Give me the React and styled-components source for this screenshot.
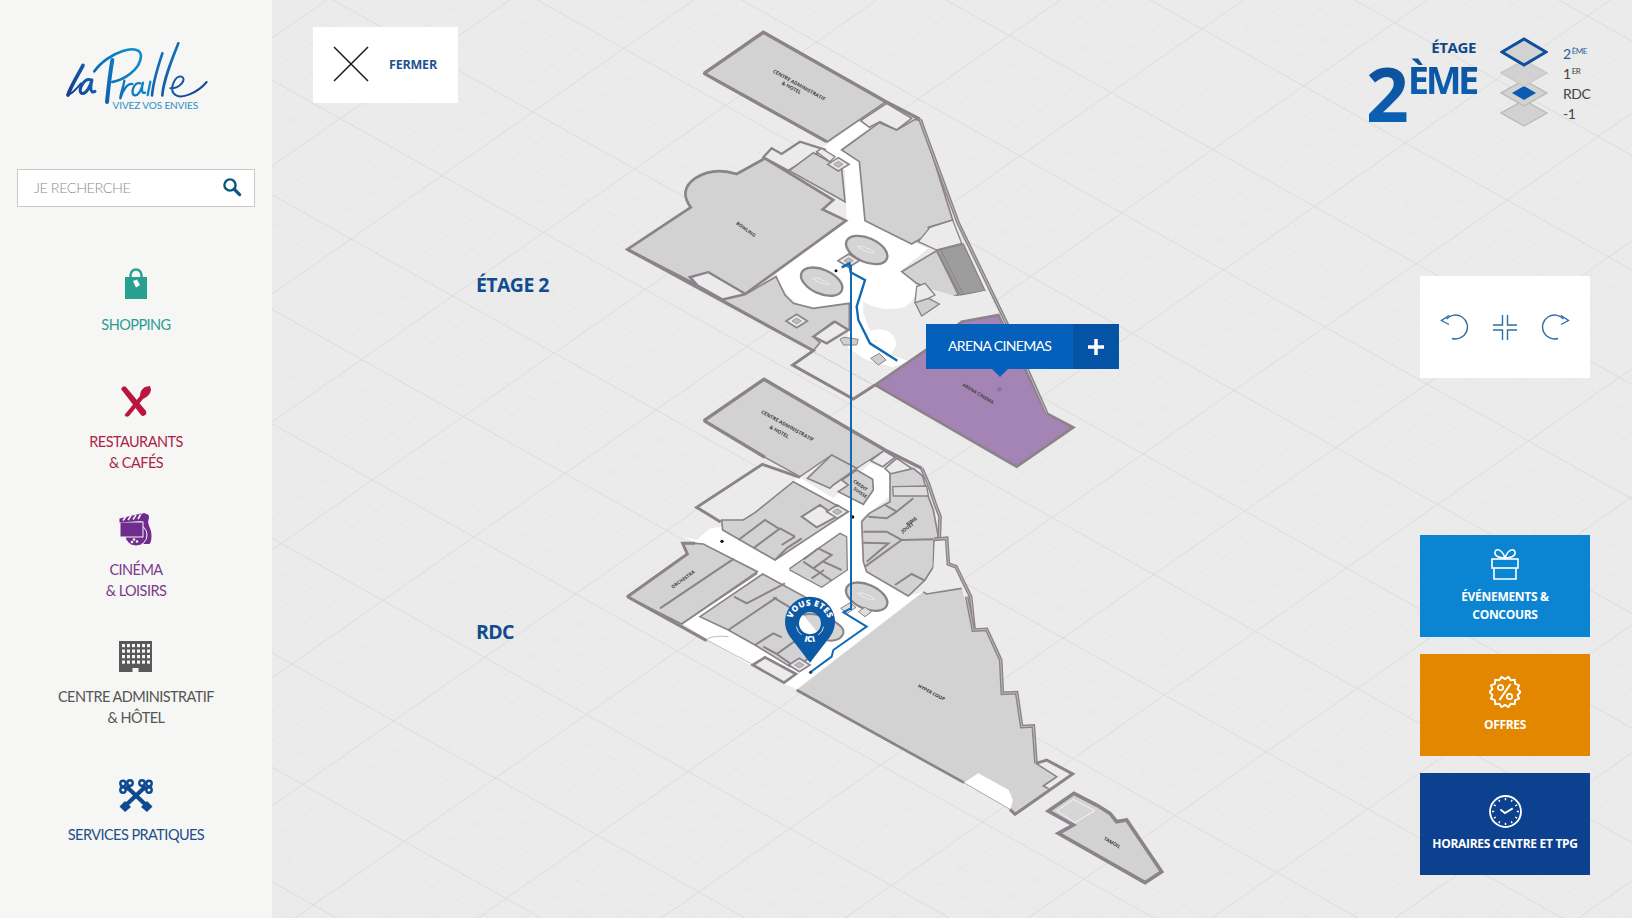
import React from 'react';
import styled, { createGlobalStyle } from 'styled-components';

const Global = createGlobalStyle`
  html, body { margin: 0; padding: 0; height: 100%; overflow: hidden; }
  #root { height: 100%; }
  * { box-sizing: border-box; }
`;

const FONT = `"Lato", "Open Sans", "Liberation Sans", sans-serif`;
const BOLD = `"Open Sans", "Liberation Sans", sans-serif`;

const Page = styled.div`
  display: flex;
  width: 1632px;
  height: 918px;
  font-family: ${FONT};
  overflow: hidden;
`;

const Sidebar = styled.aside`
  flex: 0 0 272px;
  background: #f6f6f4;
  display: flex;
  flex-direction: column;
  align-items: center;
  padding-top: 30px;
`;

const LogoBox = styled.div`
  width: 160px;
  height: 84px;
  display: flex;
  flex-direction: column;
  align-items: flex-end;
  position: relative;
  left: -1px;
  svg { display: block; flex: 0 0 auto; }
`;

const Tagline = styled.span`
  font-size: 10px;
  line-height: 11px;
  margin-top: -20px;
  margin-right: 17px;
  color: #2b8fc6;
  letter-spacing: -0.1px;
  white-space: nowrap;
`;

const Search = styled.div`
  width: 238px;
  height: 38px;
  margin-top: 55px;
  margin-bottom: 60px;
  background: #fff;
  border: 1px solid #cbcbc6;
  display: flex;
  align-items: center;
  justify-content: space-between;
  padding: 0 12px 2px 16px;
`;

const SearchText = styled.span`
  color: #8d8d8d;
  font-size: 14.5px;
  font-weight: 300;
  letter-spacing: -0.5px;
`;

const Nav = styled.nav`
  display: flex;
  flex-direction: column;
  align-items: center;
  width: 100%;
`;

const NavItem = styled.a`
  height: ${p => p.$h}px;
  display: flex;
  flex-direction: column;
  align-items: center;
  color: ${p => p.$c};
  text-align: center;
  font-size: 14.5px;
  font-weight: 400;
  line-height: 20.5px;
  letter-spacing: -0.55px;
  svg { display: block; margin-bottom: ${p => p.$g}px; }
`;

const Main = styled.main`
  flex: 1;
  position: relative;
  background: #ebebeb;
`;

const MapSvg = styled.svg`
  display: block;
  width: 1360px;
  height: 918px;
`;

const CloseBtn = styled.button`
  position: absolute;
  left: 41px;
  top: 27px;
  width: 145px;
  height: 76px;
  background: #fff;
  border: 0;
  display: flex;
  align-items: center;
  gap: 20px;
  padding: 0 0 2px 20px;
  font-family: ${BOLD};
  font-weight: 700;
  font-size: 12.5px;
  letter-spacing: -0.2px;
  color: #1c5391;
`;

const Popup = styled.div`
  position: absolute;
  left: 654px;
  top: 324px;
  width: 193px;
  height: 45px;
  display: flex;
  background: #0560bc;
  color: #fff;
  &::after {
    content: '';
    position: absolute;
    left: 66px;
    top: 45px;
    border: 8px solid transparent;
    border-top-color: #0560bc;
    border-bottom: 0;
  }
`;

const PopupName = styled.div`
  flex: 1;
  display: flex;
  align-items: center;
  padding: 0 0 2px 22px;
  font-size: 14px;
  letter-spacing: -0.65px;
  white-space: nowrap;
`;

const PopupPlus = styled.div`
  flex: 0 0 46px;
  background: #0553a5;
  display: flex;
  align-items: center;
  justify-content: center;
`;

const FloorPanel = styled.div`
  position: absolute;
  right: 41px;
  top: 37px;
  display: flex;
  align-items: flex-start;
`;

const FloorTitle = styled.div`
  display: flex;
  flex-direction: column;
  align-items: flex-end;
  margin-right: 24px;
  font-family: ${BOLD};
  color: #0d4f98;
`;

const FloorWord = styled.span`
  font-weight: 700;
  font-size: 15px;
  line-height: 20px;
  letter-spacing: -0.4px;
  color: #124886;
`;

const FloorBig = styled.div`
  display: flex;
  align-items: flex-start;
`;

const FloorNum = styled.span`
  font-size: 75px;
  line-height: 72px;
  font-weight: 700;
  letter-spacing: -2px;
  background: linear-gradient(#0d4f98, #0a62b8);
  -webkit-background-clip: text;
  background-clip: text;
  color: transparent;
`;

const FloorSup = styled.span`
  font-size: 38px;
  line-height: 44px;
  font-weight: 700;
  letter-spacing: -3.4px;
  padding-right: 3px;
  margin-right: -3px;
  margin-left: 1px;
  background: linear-gradient(#0d4f98, #0a62b8);
  -webkit-background-clip: text;
  background-clip: text;
  color: transparent;
`;

const FloorList = styled.ul`
  list-style: none;
  margin: 7px 0 0 15px;
  padding: 0;
  width: 28px;
  font-size: 14px;
  font-weight: 400;
  letter-spacing: -0.5px;
`;

const FloorItem = styled.li`
  height: 20px;
  line-height: 20px;
  white-space: nowrap;
  color: ${p => (p.$on ? '#2a5c96' : '#444')};
  sup { font-size: 8px; line-height: 0; vertical-align: 5px; margin-left: 1px; }
`;

const Rail = styled.div`
  position: absolute;
  right: 42px;
  top: 276px;
  width: 170px;
  display: flex;
  flex-direction: column;
`;

const Controls = styled.div`
  height: 102px;
  margin-bottom: 157px;
  background: #fff;
  display: flex;
  align-items: center;
  justify-content: center;
  gap: 23px;
`;

const Card = styled.a`
  height: 102px;
  margin-bottom: 17px;
  background: ${p => p.$bg};
  color: #fff;
  display: flex;
  flex-direction: column;
  align-items: center;
  padding-top: ${p => p.$pt}px;
  text-align: center;
  font-family: ${BOLD};
  font-weight: 700;
  font-size: 12px;
  line-height: 18px;
  letter-spacing: -0.3px;
  svg { display: block; margin-bottom: ${p => p.$gap}px; }
`;

const WALL = '#8b828a';
const SHOP = '#d2d2d2';
const PALE = '#ebebeb';
const BLUE = '#1269b3';

const Gridlines = () => {
  const ox = 393.7, oy = 721;
  const u = [101.7, 57];
  const v = [91, -63.5];
  const lines = [];
  for (let i = -60; i <= 60; i++) {
    for (let s = 0; s < 4; s++) {
      const k = i + s / 4;
      const major = s === 0;
      const c = major ? '#dcdcdc' : '#e6e6e6';
      const w = major ? 1 : 0.8;
      const ax = ox + k * v[0], ay = oy + k * v[1];
      lines.push(<line key={`a${k}`} x1={ax - 30 * u[0]} y1={ay - 30 * u[1]} x2={ax + 30 * u[0]} y2={ay + 30 * u[1]} stroke={c} strokeWidth={w} />);
      const bx = ox + k * u[0], by = oy + k * u[1];
      lines.push(<line key={`b${k}`} x1={bx - 30 * v[0]} y1={by - 30 * v[1]} x2={bx + 30 * v[0]} y2={by + 30 * v[1]} stroke={c} strokeWidth={w} />);
    }
  }
  return <g>{lines}</g>;
};

const Shop = ({ p, f = SHOP, w = 5, s = WALL }) => (
  <polygon points={p} fill={f} stroke={s} strokeWidth={w} strokeLinejoin="miter" />
);

const DoubleWall = ({ d, w = 11 }) => (
  <g fill="none">
    <path d={d} stroke={WALL} strokeWidth={w} />
    <path d={d} stroke="#c9c5c8" strokeWidth={2.5} />
  </g>
);

const Lbl = ({ x, y, r = 30, size = 14, children, c = '#444' }) => (
  <text x={x} y={y} transform={`rotate(${r} ${x} ${y})`} fontFamily="Open Sans, sans-serif" fontWeight="700" fontSize={size} fill={c} textAnchor="middle">{children}</text>
);

const Well = ({ x, y }) => (
  <g transform={`rotate(24 ${x} ${y})`}>
    <ellipse cx={x} cy={y} rx="66" ry="36" fill="#d4d4d4" stroke={WALL} strokeWidth="7" />
    <path d={`M${x - 28} ${y + 2} q18 -12 26 -6 q12 -6 26 2 q-20 12 -52 4z`} fill="none" stroke="#f2f2f2" strokeWidth="2" />
  </g>
);

const Lift = ({ x, y }) => (
  <g>
    <polygon points={`${x - 32},${y} ${x},${y - 20} ${x + 32},${y} ${x},${y + 20}`} fill="#e8e8e8" stroke={WALL} strokeWidth="5" />
    <polygon points={`${x - 14},${y} ${x},${y - 9} ${x + 14},${y} ${x},${y + 9}`} fill="#bdbdbd" stroke={WALL} strokeWidth="2" />
  </g>
);

const UpperFloor = () => (
  <g transform="translate(600 20) scale(0.33333)">
    {/* pale ground */}
    <polygon points="745,850 790,845 915,860 960,905 1000,870 1080,890 985,985 905,1020 820,1095 760,1135 580,1035 640,990 745,930" fill={PALE} />
    {/* floor */}
    <path d="M665 385 L775 305 L810 322 L722 388 L778 425 L795 602 L985 685 L905 750 Q935 780 950 800 Q950 840 915 860 Q850 880 790 845 L790 880 L810 932 Q880 915 890 975 L872 1005 L925 1022 L880 1042 L800 1020 L745 985 L745 930 L748 848 Q700 865 640 865 Q560 855 528 760 L740 605 L735 450 L670 395 Z" fill="#fff" />
    {/* admin */}
    <Shop p="312,160 490,37 858,245 682,365" w={5} />
    <polygon points="782,302 860,250 935,295 890,330 840,305 808,322" fill={PALE} stroke={WALL} strokeWidth="5" />
    <path d="M312 160 L490 37 L858 245 L960 298" fill="none" stroke={WALL} strokeWidth="10" />
    <path d="M312 160 L680 365" fill="none" stroke={WALL} strokeWidth="10" />
    {/* east big */}
    <Shop p="725,390 838,308 890,330 945,298 965,302 1058,600 985,622 990,640 935,672 795,602 778,425" />
    <polygon points="955,665 990,622 1058,600 1085,670 1010,690" fill={PALE} stroke={WALL} strokeWidth="4" />
    <Shop p="905,755 1010,692 1075,825 1040,832 950,790" />
    <polygon points="1010,692 1090,672 1155,812 1080,825" fill="#9c9c9c" stroke={WALL} strokeWidth="4" />
    <path d="M1022 690 L1090 825" stroke={WALL} strokeWidth="3" />
    <polygon points="950,795 1075,830 1155,812 1192,884 1085,905 1010,872 960,905 945,850" fill={PALE} />
    <polygon points="945,848 985,835 1018,852 965,888" fill="#cfcfcf" stroke={WALL} strokeWidth="4" />
    <polygon points="950,800 975,790 1005,825 985,835 945,848" fill={PALE} stroke={WALL} strokeWidth="4" />
    {/* arena */}
    <polygon points="825,1095 985,985 1085,905 1195,885 1340,1180 1420,1222 1250,1340" fill="#a484b4" stroke={WALL} strokeWidth="8" />
    <circle cx="1198" cy="1108" r="7" fill="#8f6ea3" />
    <Lbl x="1132" y="1125" r={31}>ARENA CINEMA</Lbl>
    <DoubleWall d="M960 298 L1075 610 L1220 910 L1340 1180" />
    {/* bowling */}
    <path d="M82 688 L272 562 Q235 510 285 475 Q340 440 410 462 L495 415 L700 540 L668 568 L738 602 L435 822 L325 757 L270 772 L290 795 Z" fill={SHOP} stroke={WALL} strokeWidth="8" />
    <polygon points="272,772 325,757 435,822 368,838 292,795" fill={PALE} stroke={WALL} strokeWidth="6" />
    <Lbl x="435" y="632" r={36}>BOWLING</Lbl>
    <polygon points="490,412 515,385 545,402 600,365 672,388 565,452" fill={PALE} stroke={WALL} strokeWidth="7" />
    <Shop p="568,452 640,398 725,445 735,545" />
    <polygon points="650,395 665,385 705,410 690,425" fill={PALE} stroke={WALL} strokeWidth="4" />
    <Lift x={715} y={433} />
    {/* south */}
    <Shop p="368,840 435,824 528,770 555,825 580,850 640,865 748,850 748,930 700,905 640,950 660,968 640,992" />
    <polygon points="640,950 705,905 745,930 680,970" fill={PALE} stroke={WALL} strokeWidth="7" />
    <Lift x={590} y={903} />
    <polygon points="720,958 732,952 775,958 770,975 730,975" fill="#cfcfcf" stroke={WALL} strokeWidth="3" />
    <polygon points="812,1015 838,1000 858,1020 835,1035" fill="#cfcfcf" stroke={WALL} strokeWidth="3" />
    <path d="M82 688 L640 992 L578 1035 L760 1137 L825 1095" fill="none" stroke={WALL} strokeWidth="9" />
    <path d="M640 995 L815 1092" stroke="#777" strokeWidth="1.5" strokeDasharray="3 3" fill="none" />
    <Well x={800} y={690} />
    <Well x={665} y={785} />
    <Lift x={746} y={722} />
    <circle cx="708" cy="752" r="4.5" fill="#111" />
    <Lbl x="595" y="200" r={29} size={15}>CENTRE ADMINISTRATIF</Lbl>
    <Lbl x="572" y="208" r={29} size={15}>&amp; HOTEL</Lbl>
    {/* route */}
    <path d="M752 730 L725 742 L748 730 L752 757 L795 780 L770 860 L775 900 L810 970 L892 1022" fill="none" stroke={BLUE} strokeWidth="7" />
  </g>
);

const LowerFloor = () => (
  <g transform="translate(600 370) scale(0.33333)">
    <polygon points="290,510 330,475 365,470 595,320 700,385 810,280 865,300 875,375 785,445 795,605 920,680 968,665 590,958 560,945 450,885 320,810 250,760 300,720 470,600 250,500" fill="#fff" />
    <polygon points="255,755 300,738 385,780 465,830 460,885 345,800" fill="#fff" />
    {/* pale block */}
    <polygon points="290,412 487,283 595,322 465,428 430,450 365,450" fill={PALE} />
    <path d="M362 456 L290 412 L487 283 L600 322" fill="none" stroke={WALL} strokeWidth="9" />
    {/* admin */}
    <Shop p="312,152 492,28 855,240 770,295 695,255 600,320 495,262" w={4} />
    <polygon points="812,272 852,242 885,262 848,290" fill={PALE} stroke={WALL} strokeWidth="5" />
    <polygon points="855,295 890,265 935,295 905,320 870,310" fill={PALE} stroke={WALL} strokeWidth="5" />
    <path d="M312 152 L492 28 L855 240 L965 295" fill="none" stroke={WALL} strokeWidth="10" />
    <path d="M312 152 L495 262" fill="none" stroke={WALL} strokeWidth="10" />
    <Lbl x="560" y="172" r={29} size={15}>CENTRE ADMINISTRATIF</Lbl>
    <Lbl x="535" y="190" r={29} size={15}>&amp; HOTEL</Lbl>
    {/* credit suisse */}
    <Shop p="622,325 695,255 770,295 700,345 690,355" />
    <Shop p="725,330 770,300 818,328 820,360 790,403 715,365 745,345" />
    <Lbl x="778" y="350" r={35}>CREDIT</Lbl>
    <Lbl x="778" y="372" r={35}>SUISSE</Lbl>
    {/* north row */}
    <Shop p="365,450 368,480 525,570 745,425 580,335 465,428 430,450" />
    <path d="M415 510 L495 450 L540 478 M460 535 L540 475 L585 500 M525 570 L560 535 L605 505 M545 525 L585 500" stroke={WALL} strokeWidth="6" fill="none" />
    <polygon points="605,440 660,405 710,440 650,472" fill={PALE} stroke={WALL} strokeWidth="6" />
    <Lift x={712} y={425} />
    {/* center */}
    <Shop p="570,595 720,490 740,500 742,600 665,652 570,600" w={4} />
    <path d="M612 568 L655 535 L695 555 L640 595 L695 632 M640 595 L610 575 M725 600 L670 575 M635 625 L672 600" stroke={WALL} strokeWidth="6" fill="none" />
    {/* east */}
    <path d="M870 312 L940 295 L968 318 L985 380 L1000 420 L1015 500 L1002 510 L1000 590 L975 630 L925 678 L800 605 L790 575 L785 455 L808 430 L870 395 Z" fill={SHOP} stroke={WALL} strokeWidth="5" />
    <polygon points="878,350 980,348 985,378 880,378" fill="#dcdcdc" stroke={WALL} strokeWidth="4" />
    <path d="M790 485 L860 485 L905 510 L1000 508 M790 518 L865 520 L800 575 M805 440 L860 445 L890 425 M855 405 L890 425 L940 385 M885 645 L935 612 L975 632 M905 510 L795 590" stroke={WALL} strokeWidth="6" fill="none" />
    <Lbl x="937" y="458" r={-35} c="#333">KING</Lbl>
    <Lbl x="925" y="477" r={-35} c="#333">JOUET</Lbl>
    <polygon points="1005,512 1040,510 1042,585 1065,592 1085,655 1000,668 968,668 1000,600" fill={PALE} />
    <DoubleWall d="M965 295 L985 340 L1005 400 L1020 440 L1018 505" />
    <DoubleWall d="M1002 508 L1040 505 L1045 582 L1068 590 L1112 680 L1122 775" />
    {/* orchestra */}
    <polygon points="82,680 262,552 248,520 285,520 310,522 472,605 245,762" fill={SHOP} stroke={WALL} strokeWidth="5" />
    <path d="M82 680 L262 552 L248 520 L285 520" fill="none" stroke={WALL} strokeWidth="9" />
    <path d="M180 715 L402 566" stroke={WALL} strokeWidth="6" />
    <Lbl x="252" y="632" r={-36}>ORCHESTRA</Lbl>
    <path d="M245 762 L472 610" stroke={WALL} strokeWidth="4" />
    {/* west shops */}
    <polygon points="300,740 488,612 650,700 565,760 640,830 620,870 570,890 465,825 385,780" fill={SHOP} stroke={WALL} strokeWidth="5" />
    <path d="M385 780 L530 682 M402 680 L440 700 L555 640 M520 682 L575 715 M465 825 L520 790 L545 802 M490 830 L530 852 L592 808 M530 852 L570 880" stroke={WALL} strokeWidth="6" fill="none" />
    <Lift x={598} y={885} />
    <path d="M82 680 L320 812" fill="none" stroke={WALL} strokeWidth="9" />
    <path d="M320 810 L455 882" fill="none" stroke="#999" strokeWidth="2" />
    <path d="M320 808 Q340 795 385 800" fill="none" stroke="#999" strokeWidth="2" />
    <polygon points="458,885 495,862 588,912 552,938" fill={PALE} stroke={WALL} strokeWidth="8" />
    <Well x={800} y={680} />
    <path d="M610 735 C640 720 740 760 730 790 C720 815 690 815 670 808" fill="#d4d4d4" stroke={WALL} strokeWidth="6" />
    <polygon points="722,715 750,698 768,712 742,730" fill="#dcdcdc" stroke={WALL} strokeWidth="3" />
    <polygon points="775,725 795,712 815,725 795,740" fill="#dcdcdc" stroke={WALL} strokeWidth="3" />
    <circle cx="366" cy="514" r="5" fill="#111" />
    <circle cx="758" cy="441" r="5" fill="#111" />
    {/* route */}
    <path d="M752 715 L730 727 L800 770 L700 840 L695 860 L632 906" fill="none" stroke={BLUE} strokeWidth="6" />
    <circle cx="632" cy="907" r="5" fill="#0b3f78" />
  </g>
);

const Hyper = () => (
  <g transform="translate(760 600) scale(0.33333)">
    <polygon points="110,270 490,-24 500,-18 605,-35 640,90 680,88 722,180 727,280 770,278 785,380 820,378 828,490 885,528 850,558 868,565 765,643 750,628 760,600 745,570 655,520 612,548" fill={SHOP} />
    <path d="M612 548 L655 520 L745 570 Q765 600 750 628 Z" fill="#fff" />
    <path d="M490 -24 L500 -18 L605 -35" fill="none" stroke={WALL} strokeWidth="5" />
    <polygon points="835,488 858,484 925,522 870,560 856,556 895,530" fill={PALE} />
    <DoubleWall d="M620 -10 L640 90 L680 88 L722 180 L727 280 L770 278 L785 380 L820 378 L828 490" />
    <path d="M828 490 L860 480 L938 522 L765 643 L750 628" fill="none" stroke={WALL} strokeWidth="9" />
    <path d="M828 490 L890 530 L850 558 L866 566" fill="none" stroke={WALL} strokeWidth="5" />
    <path d="M110 270 L612 548" fill="none" stroke={WALL} strokeWidth="8" />
    <path d="M612 548 L750 628" fill="none" stroke="#888" strokeWidth="2" />
    <Lbl x="512" y="282" r={28} c="#333">HYPER COOP</Lbl>
    <polygon points="865,633 942,580 1010,615 1050,640 1070,665 1100,660 1205,815 1155,848 895,700 940,675" fill={SHOP} stroke={WALL} strokeWidth="11" />
    <polygon points="890,632 940,598 1005,632 945,668" fill="#d6d6d6" stroke="#f5f5f5" strokeWidth="3" />
    <Lbl x="1054" y="732" r={30} c="#333">TAMOIL</Lbl>
  </g>
);

const Pin = () => (
  <g transform="translate(600 370) scale(0.33333)">
    <path fillRule="evenodd" d="M630 878 L570 800 A75 75 0 1 1 690 800 Z M630 727 a33 33 0 1 0 0.01 0 Z" fill="#0c5aa6" />
    <path id="pinTop" d="M573 764 A57 57 0 0 1 687 764" fill="none" />
    <path id="pinBot" d="M575 772 A56 56 0 0 0 685 772" fill="none" />
    <text fontFamily="Open Sans, sans-serif" fontWeight="800" fontSize="25" letterSpacing="1" fill="#fff" textAnchor="middle">
      <textPath href="#pinTop" startOffset="50%">VOUS ETES</textPath>
    </text>
    <text fontFamily="Open Sans, sans-serif" fontWeight="800" fontSize="25" letterSpacing="1" fill="#fff" textAnchor="middle">
      <textPath href="#pinBot" startOffset="50%">ICI</textPath>
    </text>
    <path d="M589 770 A42 42 0 0 0 605 795 M671 770 A42 42 0 0 1 655 795" fill="none" stroke="#fff" strokeWidth="2.500" />
  </g>
);

const Logo = () => (
  <svg width="160" height="90" viewBox="0 0 480 270" fill="none" strokeLinecap="round" strokeLinejoin="round">
    <defs>
      <linearGradient id="lg" gradientUnits="userSpaceOnUse" x1="40" y1="200" x2="300" y2="60">
        <stop offset="0" stopColor="#1c3a8f" />
        <stop offset="0.45" stopColor="#0b6fbd" />
        <stop offset="1" stopColor="#1299d6" />
      </linearGradient>
      <linearGradient id="lg2" gradientUnits="userSpaceOnUse" x1="280" y1="0" x2="460" y2="200">
        <stop offset="0" stopColor="#0d88cc" />
        <stop offset="1" stopColor="#1a3f92" />
      </linearGradient>
    </defs>
    <g stroke="url(#lg)">
      <path d="M84 106 C72 130 48 168 39 195" strokeWidth="11" />
      <path d="M39 195 C52 190 66 175 78 160" strokeWidth="6" />
      <path d="M108 150 C88 142 66 182 80 190 C94 194 106 168 111 150 C106 170 104 192 120 184" strokeWidth="9" />
      <path d="M172 90 C165 130 160 175 156 216" strokeWidth="12" />
      <path d="M118 124 C160 64 258 36 258 78 C256 120 205 150 172 156" strokeWidth="8" />
      <path d="M208 152 C206 170 197 188 196 205 C205 178 216 160 232 162" strokeWidth="7" />
      <path d="M256 160 C236 154 224 194 240 196 C252 196 260 175 264 158 C259 176 259 192 270 188" strokeWidth="7" />
      <path d="M286 155 L278 195" strokeWidth="7" />
    </g>
    <g stroke="url(#lg2)">
      <path d="M322 70 C308 112 294 160 291 196" strokeWidth="8" />
      <path d="M370 40 C350 90 325 150 322 196" strokeWidth="8" />
      <path d="M346 175 C376 176 396 146 380 140 C360 134 344 175 356 190 C376 214 430 186 455 156" strokeWidth="6" />
    </g>
  </svg>
);

const SearchIcon = () => (
  <svg width="20" height="20" viewBox="0 0 20 20" fill="none" stroke="#0c5580">
    <circle cx="8" cy="8" r="5.6" strokeWidth="2.4" />
    <path d="M12.2 12.2 L17.6 17.6" strokeWidth="3.2" strokeLinecap="round" />
  </svg>
);

const BagIcon = () => (
  <svg width="24" height="32" viewBox="0 0 24 32">
    <path d="M6.500 10 V8 a5.500 5.500 0 0 1 11 0 V10" fill="none" stroke="#27a08f" strokeWidth="2.400" />
    <rect x="1" y="10" width="22" height="22" fill="#27a08f" />
    <path d="M9 14 L13 12.500 L16 18 L12 20.500 Z" fill="#fff" />
  </svg>
);

const CutleryIcon = () => (
  <svg width="34" height="32" viewBox="0 0 34 32" fill="#b8153f">
    <path d="M2 4 Q4 0 7 2 L27 26 Q28 29 26 30 Q24 32 22 30 Z" />
    <path d="M5.500 30 L21 11 Q21 5 26 2 L31 1 L32 5 Q31 11 24 14 L10 31 Q7 33 5.500 30 Z" />
  </svg>
);

const CinemaIcon = () => (
  <svg width="34" height="33" viewBox="0 0 34 33">
    <path d="M27 1 a3 3 0 0 1 3 3 c0 3-1.500 4-.5 7 c1 4 3 6 3 12 c0 4-1 7-2 8 h-6 c-1-4 1-8-1-12 c-1-3 -2-4 -1-8 c.5-3-1-4-.5-7 a3 3 0 0 1 5-3 Z" fill="#6f2c8e" />
    <circle cx="17" cy="22" r="11" fill="#6f2c8e" stroke="#f6f6f4" strokeWidth="1" />
    <circle cx="13" cy="29" r="1.300" fill="#f6f6f4" />
    <circle cx="18" cy="28.500" r="1.300" fill="#f6f6f4" />
    <circle cx="15" cy="26.500" r="1.300" fill="#f6f6f4" />
    <rect x="1" y="9" width="23" height="15" fill="#6f2c8e" stroke="#f6f6f4" strokeWidth="1" />
    <path d="M0.500 5.500 L22 0.500 L23.500 8 L0.500 9.500 Z" fill="#6f2c8e" />
    <path d="M4 7.500 L7 3.500 M9 7 L12 2.800 M14 6.500 L17 2 M19 6 L21.500 1.500" stroke="#f6f6f4" strokeWidth="1.600" />
  </svg>
);

const BuildingIcon = () => {
  const cells = [];
  for (let r = 0; r < 4; r++) for (let c = 0; c < 6; c++) {
    cells.push(<rect key={`${r}-${c}`} x={3 + c * 5} y={3 + r * 5.500} width="3" height="3.200" fill="#f6f6f4" />);
  }
  return (
    <svg width="33" height="31" viewBox="0 0 33 31">
      <rect width="33" height="31" fill="#595959" />
      {cells}
      <rect x="13.500" y="27" width="6" height="4" fill="#f6f6f4" />
    </svg>
  );
};

const Key = ({ flip }) => (
  <g transform={flip ? 'translate(34 0) scale(-1 1)' : undefined}>
    <path d="M9 9 L28 27" stroke="#0d4a90" strokeWidth="4.200" fill="none" />
    <polygon points="22,28 28,22 33.500,27.500 28,33" fill="#0d4a90" />
    <circle cx="4" cy="4.500" r="2.700" fill="none" stroke="#0d4a90" strokeWidth="2.400" />
    <circle cx="11" cy="4" r="2.700" fill="none" stroke="#0d4a90" strokeWidth="2.400" />
    <circle cx="4" cy="11" r="2.700" fill="none" stroke="#0d4a90" strokeWidth="2.400" />
    <circle cx="9" cy="9" r="2.600" fill="#0d4a90" />
  </g>
);

const KeysIcon = () => (
  <svg width="34" height="33" viewBox="0 0 34 33">
    <Key />
    <Key flip />
  </svg>
);

const CloseIcon = () => (
  <svg width="36" height="36" viewBox="0 0 36 36" stroke="#1a1a1a" strokeWidth="1.500">
    <path d="M1 1 L35 35 M35 1 L1 35" />
  </svg>
);

const PlusIcon = () => (
  <svg width="16" height="16" viewBox="0 0 16 16" stroke="#fff" strokeWidth="3.500">
    <path d="M8 0 V16 M0 8 H16" />
  </svg>
);

const FloorStack = () => (
  <svg width="48" height="92" viewBox="0 0 48 92">
    <polygon points="1,76 24,63 47,76 24,89" fill="#d2d2d2" stroke="#bdbdbd" strokeWidth="1.500" />
    <polygon points="1,56 24,43 47,56 24,69" fill="#d2d2d2" stroke="#bdbdbd" strokeWidth="1.500" />
    <polygon points="12,56 24,49 36,56 24,63" fill="#0a5cb0" />
    <polygon points="1,36 24,23 47,36 24,49" fill="#d2d2d2" stroke="#c9c9c9" strokeWidth="1.500" />
    <polygon points="2,15 24,2 46,15 24,28" fill="#d2d2d2" stroke="#0d4f9c" strokeWidth="3" />
  </svg>
);

const RotateLeft = () => (
  <svg width="30" height="26" viewBox="0 0 30 26" fill="none" stroke="#2e6fa7" strokeWidth="1.400">
    <path d="M6.500 5 A12 12 0 1 1 12 24.500" />
    <path d="M9 1.500 L1.500 6.500 L9 10.500" />
  </svg>
);

const RotateRight = () => (
  <svg width="30" height="26" viewBox="0 0 30 26" fill="none" stroke="#2e6fa7" strokeWidth="1.400">
    <path d="M23.500 5 A12 12 0 1 0 18 24.500" />
    <path d="M21 1.500 L28.500 6.500 L21 10.500" />
  </svg>
);

const CollapseIcon = () => (
  <svg width="24" height="25" viewBox="0 0 24 25" fill="none" stroke="#2e6fa7" strokeWidth="1.400">
    <path d="M0 10 H9.500 V0 M14.500 0 V10 H24 M0 15 H9.500 V25 M14.500 25 V15 H24" />
  </svg>
);

const GiftIcon = () => (
  <svg width="28" height="32" viewBox="0 0 28 32" fill="none" stroke="#fff" strokeWidth="1.600">
    <rect x="1" y="11" width="26" height="9" />
    <path d="M3 20 V31 H25 V20" />
    <path d="M14 10 C8 10 3 8 4 4 C5 0 11 1 14 10 C17 1 23 0 24 4 C25 8 20 10 14 10 Z" />
  </svg>
);

const burst = (() => {
  const pts = [];
  const n = 28;
  for (let i = 0; i < n; i++) {
    const a = (i / n) * Math.PI * 2;
    const r = i % 2 ? 13 : 15.500;
    pts.push(`${(16 + r * Math.cos(a)).toFixed(2)},${(16 + r * Math.sin(a)).toFixed(2)}`);
  }
  return pts.join(' ');
})();

const BadgeIcon = () => (
  <svg width="32" height="32" viewBox="0 0 32 32" fill="none" stroke="#fff">
    <polygon points={burst} strokeWidth="2" />
    <circle cx="11.500" cy="11.500" r="2.700" strokeWidth="1.700" />
    <circle cx="20.500" cy="20.500" r="2.700" strokeWidth="1.700" />
    <path d="M21.500 8 L10.500 24" strokeWidth="2" />
  </svg>
);

const ticks = Array.from({ length: 12 }, (_, i) => {
  const a = (i / 12) * Math.PI * 2;
  return `M${(16 + 11 * Math.cos(a)).toFixed(2)} ${(16 + 11 * Math.sin(a)).toFixed(2)} L${(16 + 13 * Math.cos(a)).toFixed(2)} ${(16 + 13 * Math.sin(a)).toFixed(2)}`;
}).join(' ');

const ClockIcon = () => (
  <svg width="33" height="33" viewBox="0 0 32 32" fill="none" stroke="#fff">
    <circle cx="16" cy="16" r="15" strokeWidth="1.800" />
    <path d={ticks} strokeWidth="1.400" />
    <path d="M11 14 L15.500 17.500 L23 13" strokeWidth="1.800" />
  </svg>
);

export default function App() {
  return (
    <Page>
      <Global />
      <Sidebar>
        <LogoBox>
          <Logo />
          <Tagline>VIVEZ VOS ENVIES</Tagline>
        </LogoBox>
        <Search>
          <SearchText>JE RECHERCHE</SearchText>
          <SearchIcon />
        </Search>
        <Nav>
          <NavItem $c="#2a9d93" $h={118} $g={16}><BagIcon />SHOPPING</NavItem>
          <NavItem $c="#ad1f4a" $h={128} $g={15}><CutleryIcon />RESTAURANTS<br />&amp; CAFÉS</NavItem>
          <NavItem $c="#7b3a8e" $h={128} $g={14}><CinemaIcon />CINÉMA<br />&amp; LOISIRS</NavItem>
          <NavItem $c="#555" $h={138} $g={15}><BuildingIcon />CENTRE ADMINISTRATIF<br />&amp; HÔTEL</NavItem>
          <NavItem $c="#1c4f8c" $h={70} $g={13}><KeysIcon />SERVICES PRATIQUES</NavItem>
        </Nav>
      </Sidebar>
      <Main>
        <MapSvg viewBox="272 0 1360 918">
          <Gridlines />
          <UpperFloor />
          <LowerFloor />
          <Hyper />
          <line x1="851" y1="265" x2="851" y2="610" stroke={BLUE} strokeWidth="2" />
          <Pin />
          <text x="476" y="292" fontFamily="Open Sans, sans-serif" fontWeight="700" fontSize="19.500" letterSpacing="-0.6" fill="#114b8e">ÉTAGE 2</text>
          <text x="476" y="639" fontFamily="Open Sans, sans-serif" fontWeight="700" fontSize="19.500" letterSpacing="-0.6" fill="#114b8e">RDC</text>
        </MapSvg>
        <CloseBtn><CloseIcon />FERMER</CloseBtn>
        <Popup>
          <PopupName>ARENA CINEMAS</PopupName>
          <PopupPlus><PlusIcon /></PopupPlus>
        </Popup>
        <FloorPanel>
          <FloorTitle>
            <FloorWord>ÉTAGE</FloorWord>
            <FloorBig>
              <FloorNum>2</FloorNum>
              <FloorSup>ÈME</FloorSup>
            </FloorBig>
          </FloorTitle>
          <FloorStack />
          <FloorList>
            <FloorItem $on>2<sup>ÈME</sup></FloorItem>
            <FloorItem>1<sup>ER</sup></FloorItem>
            <FloorItem>RDC</FloorItem>
            <FloorItem>-1</FloorItem>
          </FloorList>
        </FloorPanel>
        <Rail>
          <Controls>
            <RotateLeft />
            <CollapseIcon />
            <RotateRight />
          </Controls>
          <Card $bg="#0b84d2" $pt={13} $gap={8}><GiftIcon />ÉVÉNEMENTS &amp;<br />CONCOURS</Card>
          <Card $bg="#e38600" $pt={22} $gap={8}><BadgeIcon />OFFRES</Card>
          <Card $bg="#0b418f" $pt={22} $gap={7}><ClockIcon />HORAIRES CENTRE ET TPG</Card>
        </Rail>
      </Main>
    </Page>
  );
}
